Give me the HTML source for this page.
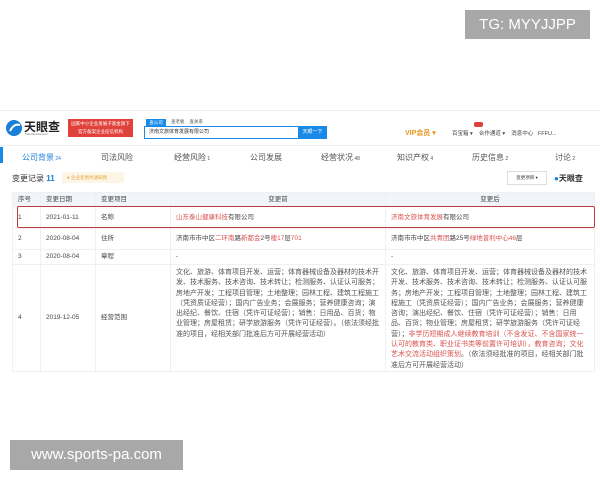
<!DOCTYPE html><html><head><meta charset="utf-8"><style>
*{margin:0;padding:0;box-sizing:border-box}
body{width:600px;height:480px;background:#fff;position:relative;overflow:hidden;font-family:"Liberation Sans","Noto Sans CJK SC",sans-serif;color:#333;font-size:6px}
.a{position:absolute;white-space:nowrap}
.r{color:#d9534f}
td{border:1px solid #eef0f3;font-size:6.5px;color:#444;vertical-align:middle;padding:0 5px;line-height:10px}
table{border-collapse:collapse;position:absolute;left:12px;top:192px;width:583px;table-layout:fixed}
.big{font-size:7px;line-height:10.3px;vertical-align:top;padding-top:3px;white-space:normal;word-break:break-all;color:#555}
</style></head><body>
<div class="a" style="left:465px;top:10px;width:125px;height:29px;background:#a8a8a8;color:#fff;font-size:15px;line-height:29px;text-align:center">TG: MYYJJPP</div>
<div class="a" style="left:0;top:110px;width:600px;height:1px;background:#f0f0f0"></div>
<svg class="a" style="left:5px;top:119px" width="18" height="18" viewBox="0 0 18 18"><circle cx="9" cy="9" r="8" fill="#1a7fd8"/><path d="M5 12 Q9 4 15 6" stroke="#fff" stroke-width="2" fill="none"/></svg>
<div class="a" style="left:24px;top:118px;font-size:12px;font-weight:bold;color:#222">天眼查</div>
<div class="a" style="left:25px;top:132px;font-size:3px;color:#666">TianYanCha.com</div>
<div class="a" style="left:68px;top:119px;width:65px;height:18px;background:#e0413a;color:#fff;font-size:4.5px;line-height:8px;text-align:center;padding-top:1px">国家中小企业发展子基金旗下<br>官方备案企业征信机构</div>
<div class="a" style="left:146px;top:119px;width:20px;height:7px;background:#1a8ae8;color:#fff;font-size:4.5px;text-align:center;line-height:7px">查公司</div>
<div class="a" style="left:171px;top:119px;font-size:4.5px;color:#555">查老板 &nbsp;&nbsp; 查关系</div>
<div class="a" style="left:144px;top:126px;width:183px;height:13px;border:1px solid #1a8ae8;font-size:5px;line-height:11px;padding-left:4px">济南文旅体育发展有限公司</div>
<div class="a" style="left:298px;top:126px;width:29px;height:13px;background:#1a8ae8;color:#fff;font-size:5px;line-height:13px;text-align:center">天眼一下</div>
<div class="a" style="left:405px;top:128px;font-size:7px;font-weight:bold;color:#e8961c">VIP会员 ▾</div>
<div class="a" style="left:452px;top:129px;font-size:5.5px;color:#444">百宝箱 ▾ &nbsp;&nbsp; 合作通道 ▾ &nbsp;&nbsp; 消息中心 &nbsp; FFFU...</div>
<div class="a" style="left:474px;top:122px;width:9px;height:5px;background:#e0413a;border-radius:2px"></div>
<div class="a" style="left:0;top:145px;width:600px;height:1px;background:#eee"></div>
<div class="a" style="left:0;top:147px;width:3px;height:16px;background:#1a8ae8"></div>
<div class="a" style="left:22px;top:152px;font-size:8px;color:#1a7fd8">公司背景<span style="font-size:5px"> 24</span></div>
<div class="a" style="left:101px;top:152px;font-size:8px;color:#555">司法风险</div>
<div class="a" style="left:174px;top:152px;font-size:8px;color:#555">经营风险<span style="font-size:5px"> 1</span></div>
<div class="a" style="left:250px;top:152px;font-size:8px;color:#555">公司发展</div>
<div class="a" style="left:321px;top:152px;font-size:8px;color:#555">经营状况<span style="font-size:5px"> 48</span></div>
<div class="a" style="left:397px;top:152px;font-size:8px;color:#555">知识产权<span style="font-size:5px"> 4</span></div>
<div class="a" style="left:472px;top:152px;font-size:8px;color:#555">历史信息<span style="font-size:5px"> 2</span></div>
<div class="a" style="left:555px;top:152px;font-size:8px;color:#555">讨论<span style="font-size:5px"> 2</span></div>
<div class="a" style="left:12px;top:173px;font-size:8px;color:#333">变更记录 <b style="color:#1a7fd8">11</b></div>
<div class="a" style="left:62px;top:172px;width:62px;height:11px;background:#fdf6e6;font-size:4.5px;color:#e8a33c;line-height:11px;padding-left:5px">● 企业变更时通知我</div>
<div class="a" style="left:507px;top:171px;width:40px;height:14px;border:1px solid #ddd;font-size:4.5px;line-height:12px;text-align:center">变更项目 ▾</div>
<div class="a" style="left:554px;top:173px;font-size:8px;font-weight:bold;color:#333"><span style="color:#1a7fd8">●</span>天眼查</div>
<table>
<colgroup><col style="width:28px"><col style="width:55px"><col style="width:75px"><col style="width:215px"><col></colgroup>
<tr style="background:#f1f5fa;height:14px"><td>序号</td><td>变更日期</td><td>变更项目</td><td style="text-align:center">变更前</td><td style="text-align:center">变更后</td></tr>
<tr style="height:22px"><td>1</td><td>2021-01-11</td><td>名称</td><td><span class="r">山东泰山健康科技</span>有限公司</td><td><span class="r">济南文旅体育发展</span>有限公司</td></tr>
<tr style="height:21px"><td>2</td><td>2020-08-04</td><td>住所</td><td>济南市市中区<span class="r">二环南</span>路<span class="r">新都会</span>2号<span class="r">楼17</span>层<span class="r">701</span></td><td>济南市市中区<span class="r">共青团</span>路25号<span class="r">绿地普利中心46</span>层</td></tr>
<tr style="height:15px"><td>3</td><td>2020-08-04</td><td>章程</td><td>-</td><td>-</td></tr>
<tr style="height:104px"><td>4</td><td>2019-12-05</td><td>经营范围</td><td class="big">文化、旅游、体育项目开发、运营；体育器械设备及器材的技术开发、技术服务、技术咨询、技术转让；检测服务、认证认可服务；房地产开发；工程项目管理；土地整理；园林工程、建筑工程施工（凭资质证经营）；国内广告业务；会展服务；营养健康咨询；演出经纪、餐饮、住宿（凭许可证经营）；销售：日用品、百货；物业管理；房屋租赁；研学旅游服务（凭许可证经营）。（依法须经批准的项目，经相关部门批准后方可开展经营活动）</td><td class="big">文化、旅游、体育项目开发、运营；体育器械设备及器材的技术开发、技术服务、技术咨询、技术转让；检测服务、认证认可服务；房地产开发；工程项目管理；土地整理；园林工程、建筑工程施工（凭资质证经营）；国内广告业务；会展服务；营养健康咨询；演出经纪、餐饮、住宿（凭许可证经营）；销售：日用品、百货；物业管理；房屋租赁；研学旅游服务（凭许可证经营）；<span class="r">非学历短期成人继续教育培训（不含发证、不含国家统一认可的教育类、职业证书类等前置许可培训），教育咨询；文化艺术交流活动组织策划</span>。（依法须经批准的项目，经相关部门批准后方可开展经营活动）</td></tr>
</table>
<div class="a" style="left:17px;top:206px;width:578px;height:22px;border:1.5px solid #c0393b;border-radius:2px"></div>
<div class="a" style="left:10px;top:440px;width:173px;height:30px;background:#a8a8a8;color:#fff;font-size:15px;line-height:30px;text-align:center">www.sports-pa.com</div>
</body></html>
